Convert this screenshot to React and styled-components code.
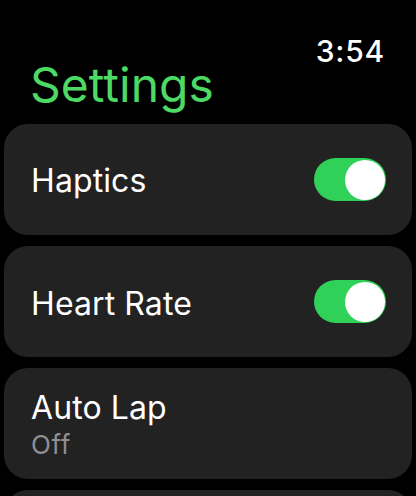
import React from "react";
import styled, { createGlobalStyle } from "styled-components";

const GlobalStyle = createGlobalStyle`
  html, body {
    margin: 0;
    padding: 0;
    background: #000000;
  }
  body {
    font-family: Inter, "Noto Sans", "Liberation Sans", sans-serif;
    -webkit-font-smoothing: antialiased;
  }
`;

const Screen = styled.div`
  width: 416px;
  height: 496px;
  overflow: hidden;
  background: #000000;
  display: flex;
  flex-direction: column;
`;

const Header = styled.div`
  display: flex;
  flex-direction: column;
  padding: 36px 31px 0 30px;
  margin-bottom: 19px;
`;

const Time = styled.div`
  align-self: flex-end;
  color: #ffffff;
  font-size: 30px;
  font-weight: 500;
  line-height: 30px;
  letter-spacing: 0.8px;
`;

const Title = styled.h1`
  margin: -1px 0 0;
  color: #4cd964;
  font-size: 48px;
  font-weight: 400;
  line-height: 40px;
`;

const List = styled.div`
  display: flex;
  flex-direction: column;
  gap: 11px;
  padding: 0 4px;
`;

const Card = styled.div`
  flex-shrink: 0;
  height: 111px;
  box-sizing: border-box;
  background: #222222;
  border-radius: 24px;
  display: flex;
  flex-direction: ${({ $stacked }) => ($stacked ? "column" : "row")};
  align-items: ${({ $stacked }) => ($stacked ? "flex-start" : "center")};
  justify-content: ${({ $stacked }) => ($stacked ? "flex-start" : "space-between")};
  padding: ${({ $stacked }) => ($stacked ? "21px 26px 0 27px" : "0 26px 0 27px")};
`;

const Label = styled.div`
  color: #ffffff;
  font-size: 32px;
  font-weight: 400;
  line-height: 38px;
  letter-spacing: 0.1px;
  margin-top: ${({ $nudge }) => $nudge || 0}px;
`;

const Sub = styled.div`
  color: #8e8e93;
  font-size: 26px;
  line-height: 32px;
  letter-spacing: 0.6px;
  margin-top: 2px;
`;

const Track = styled.div`
  width: 72px;
  height: 43px;
  border-radius: 22px;
  background: ${({ $on }) => ($on ? "#30d158" : "#3a3a3c")};
  display: flex;
  align-items: center;
  justify-content: ${({ $on }) => ($on ? "flex-end" : "flex-start")};
  padding: 0 1px;
  box-sizing: border-box;
`;

const Knob = styled.div`
  width: 40px;
  height: 40px;
  border-radius: 50%;
  background: #ffffff;
`;

const Toggle = ({ on }) => (
  <Track $on={on}>
    <Knob />
  </Track>
);

export default function App() {
  return (
    <Screen>
      <GlobalStyle />
      <Header>
        <Time>3:54</Time>
        <Title>Settings</Title>
      </Header>
      <List>
        <Card>
          <Label $nudge={3}>Haptics</Label>
          <Toggle on />
        </Card>
        <Card>
          <Label $nudge={4}>Heart Rate</Label>
          <Toggle on />
        </Card>
        <Card $stacked>
          <Label>Auto Lap</Label>
          <Sub>Off</Sub>
        </Card>
        <Card />
      </List>
    </Screen>
  );
}
